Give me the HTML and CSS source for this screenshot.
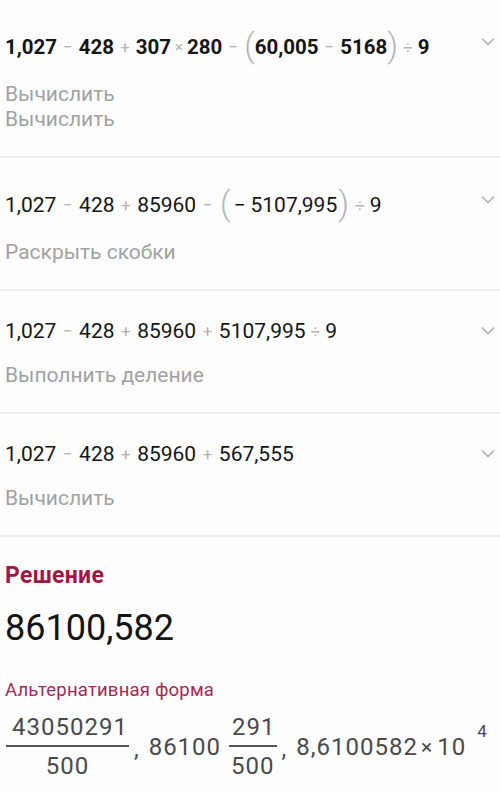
FILE: index.html
```html
<!DOCTYPE html>
<html lang="ru">
<head>
<meta charset="utf-8">
<link rel="stylesheet" href="styles.css">
</head>
<body>
<div class="steps">
  <div class="step tall">
    <div class="step-head">
      <div class="expr bold">
        <span>1,027</span><span class="op">−</span><span>428</span><span class="op">+</span><span>307</span><span class="op times">×</span><span>280</span><span class="op">−</span><span class="paren">(</span><span>60,005</span><span class="op">−</span><span>5168</span><span class="paren">)</span><span class="op div">÷</span><span>9</span>
      </div>
      <svg class="chev" width="14" height="9" viewBox="0 0 14 9"><polyline points="1,1.5 7,7.5 13,1.5" fill="none" stroke="#b3b3b3" stroke-width="1.7"/></svg>
    </div>
    <div class="label">Вычислить</div>
    <div class="label">Вычислить</div>
  </div>
  <div class="step tall">
    <div class="step-head">
      <div class="expr">
        <span>1,027</span><span class="op">−</span><span>428</span><span class="op">+</span><span>85960</span><span class="op">−</span><span class="paren">(</span><span class="neg">−</span><span>5107,995</span><span class="paren">)</span><span class="op div">÷</span><span>9</span>
      </div>
      <svg class="chev" width="14" height="9" viewBox="0 0 14 9"><polyline points="1,1.5 7,7.5 13,1.5" fill="none" stroke="#b3b3b3" stroke-width="1.7"/></svg>
    </div>
    <div class="label">Раскрыть скобки</div>
  </div>
  <div class="step">
    <div class="step-head">
      <div class="expr">
        <span>1,027</span><span class="op">−</span><span>428</span><span class="op">+</span><span>85960</span><span class="op">+</span><span>5107,995</span><span class="op div">÷</span><span>9</span>
      </div>
      <svg class="chev" width="14" height="9" viewBox="0 0 14 9"><polyline points="1,1.5 7,7.5 13,1.5" fill="none" stroke="#b3b3b3" stroke-width="1.7"/></svg>
    </div>
    <div class="label">Выполнить деление</div>
  </div>
  <div class="step">
    <div class="step-head">
      <div class="expr">
        <span>1,027</span><span class="op">−</span><span>428</span><span class="op">+</span><span>85960</span><span class="op">+</span><span>567,555</span>
      </div>
      <svg class="chev" width="14" height="9" viewBox="0 0 14 9"><polyline points="1,1.5 7,7.5 13,1.5" fill="none" stroke="#b3b3b3" stroke-width="1.7"/></svg>
    </div>
    <div class="label">Вычислить</div>
  </div>
</div>

<div class="solution">
  <div class="sol-title">Решение</div>
  <div class="sol-value">86100,582</div>
  <div class="alt-title">Альтернативная форма</div>
  <div class="alt-forms">
    <span class="frac first"><span class="num">43050291</span><span class="bar"></span><span class="den">500</span></span>
    <span class="sep">,</span>
    <span class="whole">86100</span>
    <span class="frac"><span class="num">291</span><span class="bar"></span><span class="den">500</span></span>
    <span class="sep">,</span>
    <span class="sci">8,6100582</span><span class="x">×</span><span class="sci">10</span><sup class="exp">4</sup>
  </div>
</div>
</body>
</html>
```

FILE: styles.css
```css
html, body {
  margin: 0;
  padding: 0;
  background: #fdfdfd;
}
body {
  width: 500px;
  font-family: Roboto, "Noto Sans", sans-serif;
  color: #151515;
}
.step {
  padding: 23px 5px 24px 5px;
  border-bottom: 2px solid #efefef;
}
.step.tall {
  padding-top: 27px;
  padding-bottom: 24px;
}
.step-head {
  display: flex;
  justify-content: space-between;
  align-items: flex-start;
}
.expr {
  display: flex;
  align-items: center;
  height: 34px;
  font-size: 21px;
  white-space: nowrap;
}
.tall .expr {
  height: 40px;
}
.expr.bold {
  font-weight: 700;
  font-size: 20.5px;
}
.op {
  color: #b5b5b5;
  font-weight: 400;
  font-size: 17px;
  margin: 0 6.5px;
}
.bold .op {
  margin: 0 6px;
}
.op.times {
  font-size: 15px;
  margin: 0 4px;
}
.op.div {
  margin: 0 5px;
}
.paren {
  color: #b5b5b5;
  font-weight: 300;
  font-size: 33px;
  line-height: 40px;
  margin: -3px 1px 0 1px;
}
.bold .paren {
  margin: -3px 0 0 0;
}
.neg {
  margin-right: 5px;
  margin-left: 2px;
}
.chev {
  margin-top: 12px;
  flex: none;
}
.tall .chev {
  margin-top: 10px;
}
.label {
  color: #a2a2a2;
  font-size: 21px;
  line-height: 25px;
}
.step-head + .label {
  margin-top: 15px;
}
.solution {
  padding: 26px 5px 0 5px;
}
.sol-title {
  color: #a01840;
  font-weight: 700;
  font-size: 23px;
  line-height: 26px;
  letter-spacing: 0.3px;
}
.sol-value {
  margin-top: 18px;
  font-size: 36px;
  line-height: 42px;
  color: #141414;
}
.alt-title {
  margin-top: 30px;
  color: #a32a55;
  font-size: 18.5px;
  line-height: 22px;
  letter-spacing: 0.2px;
}
.alt-forms {
  margin-top: 12px;
  display: flex;
  align-items: center;
  color: #4a4a4a;
  font-size: 24px;
  letter-spacing: 1px;
  padding-left: 1px;
}
.frac {
  display: inline-flex;
  flex-direction: column;
  align-items: center;
}
.num {
  line-height: 28px;
  padding: 0 1px 0 3px;
}
.frac.first .num {
  padding-left: 6px;
}
.bar {
  align-self: stretch;
  height: 2px;
  background: #555;
  margin: 4px 0 7px 0;
}
.den {
  line-height: 24px;
}
.sep {
  margin: 6px 9px 0 5px;
}
.whole {
  margin-top: 2px;
  margin-right: 8px;
}
.sci {
  margin-top: 2px;
}
.x {
  margin: 2px 4px 0 3px;
  font-size: 21px;
}
.exp {
  align-self: flex-start;
  font-size: 17px;
  margin-left: 11px;
  margin-top: 8px;
  vertical-align: baseline;
  line-height: 20px;
}
```
